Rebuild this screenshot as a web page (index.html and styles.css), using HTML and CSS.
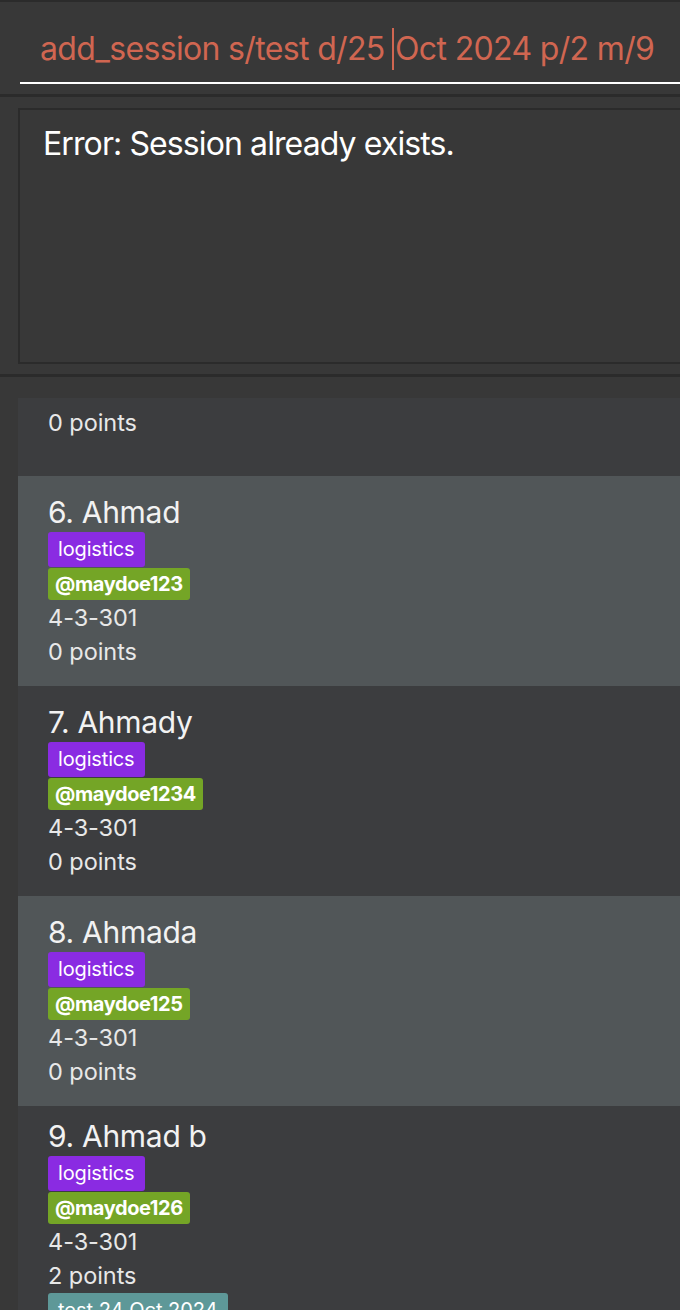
FILE: index.html
```html
<!DOCTYPE html>
<html lang="en">
<head>
<meta charset="utf-8">
<title>Address Book</title>
<link rel="stylesheet" href="styles.css">
</head>
<body>
<div class="app">
  <section class="command-pane">
    <div class="command-field">add_session s/test d/25 <span class="caret"></span>Oct 2024 p/2 m/9</div>
  </section>
  <div class="divider"></div>
  <section class="result-pane">
    <div class="result-box">Error: Session already exists.</div>
  </section>
  <div class="divider"></div>
  <section class="list-pane">
    <div class="list-viewport">
      <ul class="list">
        <li class="card card--dark card--tall">
          <div class="name">5. Ahmad</div>
          <div class="tags"><span class="tag tag--role">logistics</span></div>
          <div class="tags"><span class="tag tag--tele">@maydoe12</span></div>
          <div class="detail">4-3-301</div>
          <div class="detail">0 points</div>
        </li>
        <li class="card card--light">
          <div class="name">6. Ahmad</div>
          <div class="tags"><span class="tag tag--role">logistics</span></div>
          <div class="tags"><span class="tag tag--tele">@maydoe123</span></div>
          <div class="detail">4-3-301</div>
          <div class="detail">0 points</div>
        </li>
        <li class="card card--dark">
          <div class="name">7. Ahmady</div>
          <div class="tags"><span class="tag tag--role">logistics</span></div>
          <div class="tags"><span class="tag tag--tele">@maydoe1234</span></div>
          <div class="detail">4-3-301</div>
          <div class="detail">0 points</div>
        </li>
        <li class="card card--light">
          <div class="name">8. Ahmada</div>
          <div class="tags"><span class="tag tag--role">logistics</span></div>
          <div class="tags"><span class="tag tag--tele">@maydoe125</span></div>
          <div class="detail">4-3-301</div>
          <div class="detail">0 points</div>
        </li>
        <li class="card card--dark">
          <div class="name">9. Ahmad b</div>
          <div class="tags"><span class="tag tag--role">logistics</span></div>
          <div class="tags"><span class="tag tag--tele">@maydoe126</span></div>
          <div class="detail">4-3-301</div>
          <div class="detail">2 points</div>
          <div class="tags"><span class="tag tag--session">test 24 Oct 2024</span></div>
        </li>
      </ul>
    </div>
  </section>
</div>
</body>
</html>
```

FILE: styles.css
```css
* { box-sizing: border-box; }

html, body {
  margin: 0;
  padding: 0;
  background: #383838;
  width: 680px;
  height: 1310px;
  overflow: hidden;
  font-family: "Inter", "Liberation Sans", sans-serif;
}

.app {
  display: flex;
  flex-direction: column;
  height: 1310px;
}

.command-pane {
  height: 94px;
  border-top: 2px solid #2b2b2b;
  padding-left: 20px;
  background: #383838;
}

.command-field {
  height: 82px;
  border-bottom: 2px solid #ffffff;
  padding: 26px 0 0 20px;
  font-size: 32px;
  line-height: 40px;
  color: #d06651;
  white-space: nowrap;
  letter-spacing: -0.65px;
}

.caret {
  display: inline-block;
  width: 0;
  height: 42px;
  border-left: 2px solid #d06651;
  vertical-align: -10px;
  margin-left: -1px;
  margin-right: 1px;
}

.divider {
  height: 3px;
  background: #2b2b2b;
}

.result-pane {
  padding: 11px 0 10px 18px;
}

.result-box {
  height: 256px;
  border: 2px solid #2b2b2b;
  border-right: none;
  padding: 14px 0 0 23px;
  font-size: 32px;
  line-height: 40px;
  color: #ffffff;
  letter-spacing: -0.9px;
  background: #383838;
}

.list-pane {
  flex: 1;
  padding: 21px 0 0 18px;
  min-height: 0;
}

.list-viewport {
  height: 100%;
  overflow: hidden;
}

.list {
  list-style: none;
  margin: -151px 0 0 0;
  padding: 0;
}

.card {
  min-height: 210px;
  padding: 12px 0 12px 30px;
  display: flex;
  flex-direction: column;
  justify-content: center;
  align-items: flex-start;
}

.card--tall {
  min-height: 229px;
  padding-bottom: 31px;
}

.card--dark { background: #3c3d3f; }
.card--light { background: #515658; }

.name {
  font-size: 30px;
  line-height: 36px;
  color: #f2f2f2;
  margin-bottom: 2px;
  letter-spacing: -0.3px;
}

.tags {
  display: flex;
  margin-bottom: 1px;
}

.tag {
  display: inline-block;
  color: #ffffff;
  font-size: 20px;
  border-radius: 3px;
}

.tag--role {
  background: #8a2be2;
  height: 35px;
  line-height: 35px;
  padding: 0 10px;
  letter-spacing: -0.15px;
}

.tag--tele {
  background: #74a526;
  height: 32px;
  line-height: 32px;
  padding: 0 7px;
  font-weight: 700;
  letter-spacing: -0.4px;
}

.tag--session {
  background: #5e9898;
  height: 35px;
  line-height: 35px;
  padding: 0 10px;
}

.detail {
  font-size: 23.5px;
  line-height: 34px;
  color: #e8e8e8;
  letter-spacing: -0.05px;
}
```
